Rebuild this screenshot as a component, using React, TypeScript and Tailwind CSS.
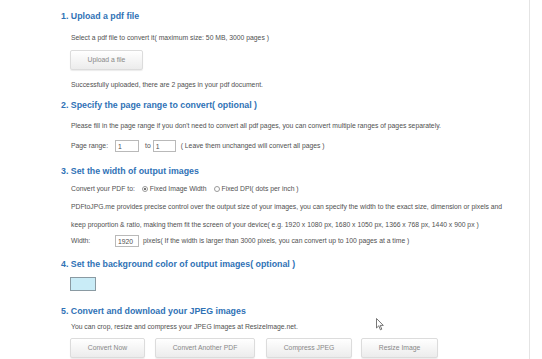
import { useState } from "react";

const btn =
  "h-[20px] rounded-[2px] border border-[#dcdcdc] bg-gradient-to-b from-white to-[#ececec] shadow-[0_1px_1px_rgba(0,0,0,0.08)] text-[6.8px] text-[#888] flex items-center justify-center";

const heading = "h-[14px] leading-[14px] text-[8.8px] font-bold text-[#2f72b6] whitespace-nowrap";
const body = "h-[12px] leading-[12px] text-[6.8px] text-[#505050] whitespace-nowrap";
const field =
  "h-[12px] border border-[#b9b9b9] bg-white text-[6.8px] leading-[10px] px-[2px] text-[#505050] outline-none";

function Radio({ checked }: { checked: boolean }) {
  return (
    <span className="w-[6px] h-[6px] rounded-full border border-[#9a9a9a] bg-white flex items-center justify-center">
      {checked && <span className="w-[2px] h-[2px] rounded-full bg-[#444]" />}
    </span>
  );
}

export default function App() {
  const [from, setFrom] = useState("1");
  const [to, setTo] = useState("1");
  const [width, setWidth] = useState("1920");
  const [mode, setMode] = useState<"width" | "dpi">("width");

  return (
    <div className="relative w-[542px] h-[359px] overflow-hidden bg-white font-['Liberation_Sans',Arial,sans-serif]">
      <div className="w-[530px] h-full border-r border-[#e4e4e4] pl-[61px] pt-[9px]">
        {/* 1 */}
        <div className={heading}>1. Upload a pdf file</div>
        <div className="pl-[10px]">
          <div className={`${body} mt-[9px]`}>
            Select a pdf file to convert it( maximum size: 50 MB, 3000 pages )
          </div>
          <button className={`${btn} w-[73px] h-[19px] mt-[6px] -ml-[1px]`}>Upload a file</button>
          <div className={`${body} mt-[9px]`}>
            Successfully uploaded, there are 2 pages in your pdf document.
          </div>
        </div>

        {/* 2 */}
        <div className={`${heading} mt-[7px]`}>2. Specify the page range to convert( optional )</div>
        <div className="pl-[10px]">
          <div className={`${body} mt-[8px]`}>
            Please fill in the page range if you don't need to convert all pdf pages, you can convert
            multiple ranges of pages separately.
          </div>
          <div className={`${body} mt-[8px] flex items-center`}>
            <span className="w-[44px]">Page range:</span>
            <input className={`${field} w-[24px]`} value={from} onChange={(e) => setFrom(e.target.value)} />
            <span className="ml-[6px] mr-[2px]">to</span>
            <input className={`${field} w-[23px]`} value={to} onChange={(e) => setTo(e.target.value)} />
            <span className="ml-[5px]">( Leave them unchanged will convert all pages )</span>
          </div>
        </div>

        {/* 3 */}
        <div className={`${heading} mt-[12px]`}>3. Set the width of output images</div>
        <div className="pl-[10px]">
          <div className={`${body} mt-[5px] flex items-center`}>
            <span>Convert your PDF to:</span>
            <span className="flex items-center ml-[7px] gap-[2px]" onClick={() => setMode("width")}>
              <Radio checked={mode === "width"} />
              Fixed Image Width
            </span>
            <span className="flex items-center ml-[7px] gap-[2px]" onClick={() => setMode("dpi")}>
              <Radio checked={mode === "dpi"} />
              Fixed DPI( dots per inch )
            </span>
          </div>
          <p className="mt-[3px] leading-[18px] text-[6.8px] text-[#505050] whitespace-nowrap">
            PDFtoJPG.me provides precise control over the output size of your images, you can specify the
            width to the exact size, dimension or pixels and
            <br />
            keep proportion &amp; ratio, making them fit the screen of your device( e.g. 1920 x 1080 px, 1680
            x 1050 px, 1366 x 768 px, 1440 x 900 px )
          </p>
          <div className={`${body} mt-[1px] flex items-center`}>
            <span className="w-[44px]">Width:</span>
            <input className={`${field} w-[24px]`} value={width} onChange={(e) => setWidth(e.target.value)} />
            <span className="ml-[4px]">
              pixels( If the width is larger than 3000 pixels, you can convert up to 100 pages at a time )
            </span>
          </div>
        </div>

        {/* 4 */}
        <div className={`${heading} mt-[10px]`}>4. Set the background color of output images( optional )</div>
        <div className="pl-[9px]">
          <div className="mt-[6px] w-[26px] h-[14px] border border-[#8a9aa2] bg-[#c9ecf7]" />
        </div>

        {/* 5 */}
        <div className={`${heading} mt-[13px]`}>5. Convert and download your JPEG images</div>
        <div className="pl-[10px]">
          <div className={`${body} mt-[3px]`}>
            You can crop, resize and compress your JPEG images at ResizeImage.net.
          </div>
          <div className="mt-[5px] flex -ml-[1px]">
            <button className={`${btn} w-[75px]`}>Convert Now</button>
            <button className={`${btn} w-[100px] ml-[10px]`}>Convert Another PDF</button>
            <button className={`${btn} w-[86px] ml-[11px]`}>Compress JPEG</button>
            <button className={`${btn} w-[77px] ml-[9px]`}>Resize Image</button>
          </div>
        </div>
      </div>

      {/* mouse cursor */}
      <svg className="absolute left-[376px] top-[318px]" width="8" height="13" viewBox="0 0 8 13">
        <path d="M0.5 0.5 L0.5 10 L2.8 7.8 L4.4 11.8 L5.8 11.2 L4.2 7.4 L7.3 7.4 Z" fill="white" stroke="#555" strokeWidth="0.8" />
      </svg>
    </div>
  );
}
